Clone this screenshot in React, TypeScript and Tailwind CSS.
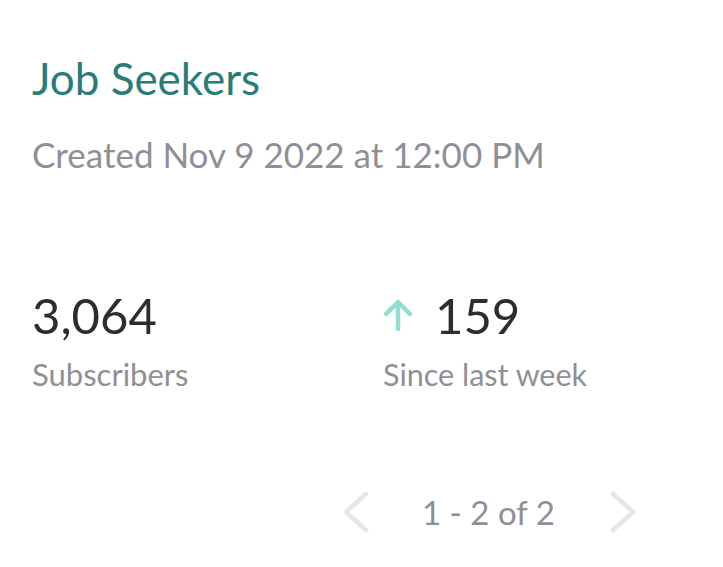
export default function App() {
  return (
    <div
      className="flex h-[567px] w-[723px] flex-col bg-white px-8 pt-[52px]"
      style={{ fontFamily: 'Lato, "Noto Sans", sans-serif' }}
    >
      <h1 className="text-[44px] leading-[52px] text-[#2a7d76]">Job Seekers</h1>
      <p className="mt-[29px] text-[35px] leading-[42px] text-[#8f8f96]">
        Created Nov 9 2022 at 12:00 PM
      </p>
      <div className="mt-[112px] flex">
        <div className="w-[351px]">
          <div className="text-[49px] leading-[56px] text-[#2c2d33]">3,064</div>
          <div className="mt-[13px] text-[31px] leading-[36px] text-[#8f8f96]">Subscribers</div>
        </div>
        <div>
          <div className="flex items-center">
            <svg width="30" height="32" viewBox="0 0 30 32" fill="none" stroke="#8fdfd0" strokeWidth="4.5" strokeLinecap="round" strokeLinejoin="round">
              <path d="M15 30V3M3 15 15 3l12 12" />
            </svg>
            <span className="ml-[22px] text-[49px] leading-[56px] text-[#2c2d33]">159</span>
          </div>
          <div className="mt-[13px] text-[30.5px] leading-[36px] text-[#8f8f96]">Since last week</div>
        </div>
      </div>
      <div className="mt-[96px] flex h-12 items-center pl-[311px]">
        <svg width="26" height="42" viewBox="0 0 26 42" fill="none" stroke="#e4e6ee" strokeWidth="4.5" strokeLinecap="round" strokeLinejoin="round">
          <path d="M23 3 3 21l20 18" />
        </svg>
        <span className="ml-[53px] text-[33px] leading-[40px] text-[#8f8f96]">1 - 2 of 2</span>
        <svg className="ml-[55px]" width="26" height="42" viewBox="0 0 26 42" fill="none" stroke="#e4e6ee" strokeWidth="4.5" strokeLinecap="round" strokeLinejoin="round">
          <path d="M3 3l20 18L3 39" />
        </svg>
      </div>
    </div>
  );
}
